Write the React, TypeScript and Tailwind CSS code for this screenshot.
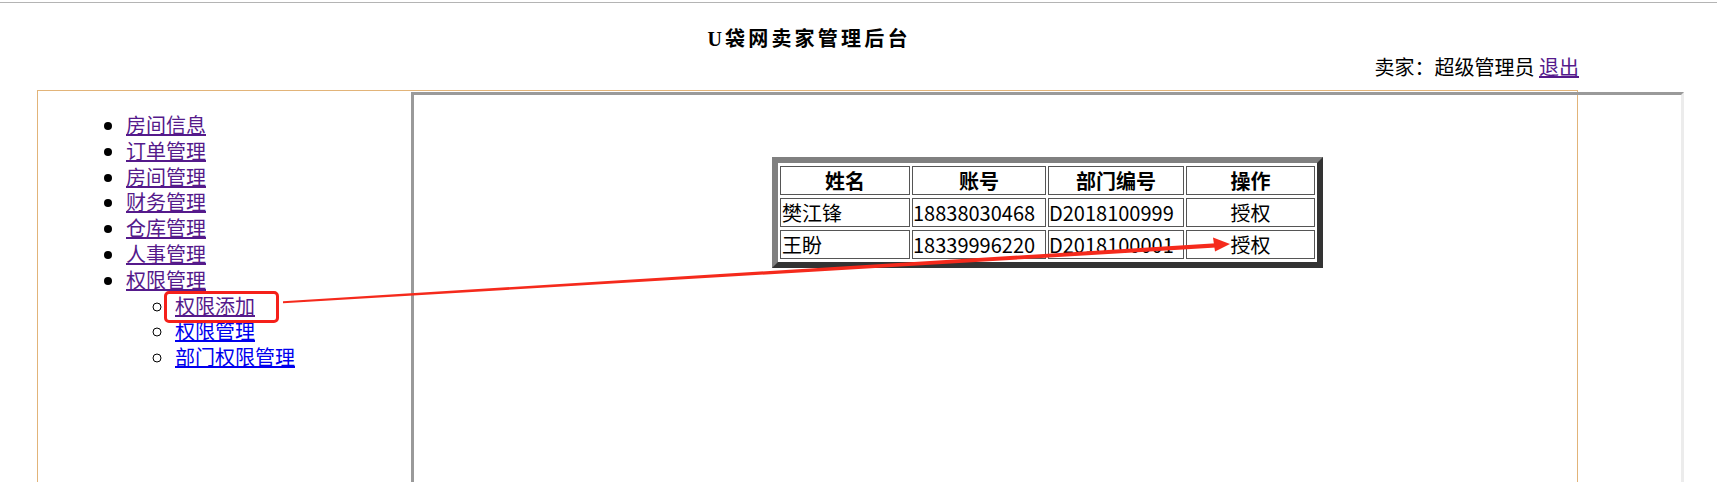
import React from "react";

// ── Seller admin: permission page with annotated screenshot overlay ─────────

const FONT = "font-['Microsoft_YaHei','Noto_Sans_CJK_SC',sans-serif]";

type MenuItem = { label: string; visited: boolean; children?: MenuItem[] };

const MENU: MenuItem[] = [
  { label: "房间信息", visited: true },
  { label: "订单管理", visited: true },
  { label: "房间管理", visited: true },
  { label: "财务管理", visited: true },
  { label: "仓库管理", visited: true },
  { label: "人事管理", visited: true },
  {
    label: "权限管理",
    visited: true,
    children: [
      { label: "权限添加", visited: true },
      { label: "权限管理", visited: false },
      { label: "部门权限管理", visited: false },
    ],
  },
];

const ROWS = [
  { name: "樊江锋", account: "18838030468", dept: "D2018100999" },
  { name: "王盼", account: "18339996220", dept: "D2018100001" },
];

function NavLink({ item }: { item: MenuItem }) {
  return (
    <a
      href="#"
      className={item.visited ? "text-[#551a8b] underline" : "text-[#0000ee] underline"}
    >
      {item.label}
    </a>
  );
}

function Sidebar() {
  return (
    <div className="w-[373px] shrink-0">
      <ul className="list-disc pl-[88px] pt-[21px]">
        {MENU.map((item) => (
          <li key={item.label} className="leading-[25.8px]">
            <NavLink item={item} />
            {item.children && (
              <ul className="list-[circle] pl-[49px]">
                {item.children.map((c) => (
                  <li key={c.label} className="leading-[25.8px]">
                    <NavLink item={c} />
                  </li>
                ))}
              </ul>
            )}
          </li>
        ))}
      </ul>
    </div>
  );
}

const cell = "border border-[#555] h-[29px] p-0 leading-[27px]";

function StaffTable() {
  return (
    <table className="mx-auto mt-[62px] border-separate border-spacing-x-[2px] border-spacing-y-[3px] border-[6px] border-t-[#808080] border-l-[#808080] border-r-[#333] border-b-[#333]">
      <thead>
        <tr>
          <th className={`${cell} w-[130px] font-bold text-center`}>姓名</th>
          <th className={`${cell} w-[134px] font-bold text-center`}>账号</th>
          <th className={`${cell} w-[136px] font-bold text-center`}>部门编号</th>
          <th className={`${cell} w-[129px] font-bold text-center`}>操作</th>
        </tr>
      </thead>
      <tbody>
        {ROWS.map((r) => (
          <tr key={r.account}>
            <td className={`${cell} pl-[1px] text-left`}>{r.name}</td>
            <td className={`${cell} text-left`}>{r.account}</td>
            <td className={`${cell} text-left`}>{r.dept}</td>
            <td className={`${cell} text-center`}>授权</td>
          </tr>
        ))}
      </tbody>
    </table>
  );
}

// ── Annotation: red box + arrow drawn over the page ─────────────────────────

function Annotation() {
  return (
    <>
      <div className="absolute left-[164px] top-[291px] w-[115px] h-[32px] border-[3px] border-[#f5201a] rounded-[5px]" />
      <svg className="absolute left-0 top-0 pointer-events-none" width="1717" height="482">
        <polygon points="283,301.2 1216,243.2 1216,247.6 283,303.2" fill="#f52a1c" />
        <polygon points="1230,244 1213,237.5 1215,251.5" fill="#f52a1c" />
      </svg>
    </>
  );
}

export default function App() {
  return (
    <div className={`relative w-[1717px] h-[482px] overflow-hidden bg-white text-black text-[20px] ${FONT}`}>
      <div className="mt-[2px] h-px bg-[#b4b4b4]" />

      <h1 className="mt-[23px] w-[1618px] text-center text-[20px] leading-[26px] font-bold tracking-[3.2px] font-['Liberation_Serif','Noto_Sans_CJK_SC',serif]">
        U袋网卖家管理后台
      </h1>

      <div className="mt-[2px] w-[1579px] text-right leading-[26px]">
        卖家：超级管理员{" "}
        <a href="#" className="text-[#551a8b] underline">
          退出
        </a>
      </div>

      <div className="ml-[37px] mt-[10px] flex h-[400px] w-[1541px] border-l border-r border-t border-[#e2b479]">
        <Sidebar />
        <div className="mt-px h-[420px] w-[1273px] shrink-0 border-[3px] border-t-[#9a9a9a] border-l-[#9a9a9a] border-r-[#ececec] border-b-[#ececec]">
          <StaffTable />
        </div>
      </div>

      <Annotation />
    </div>
  );
}
